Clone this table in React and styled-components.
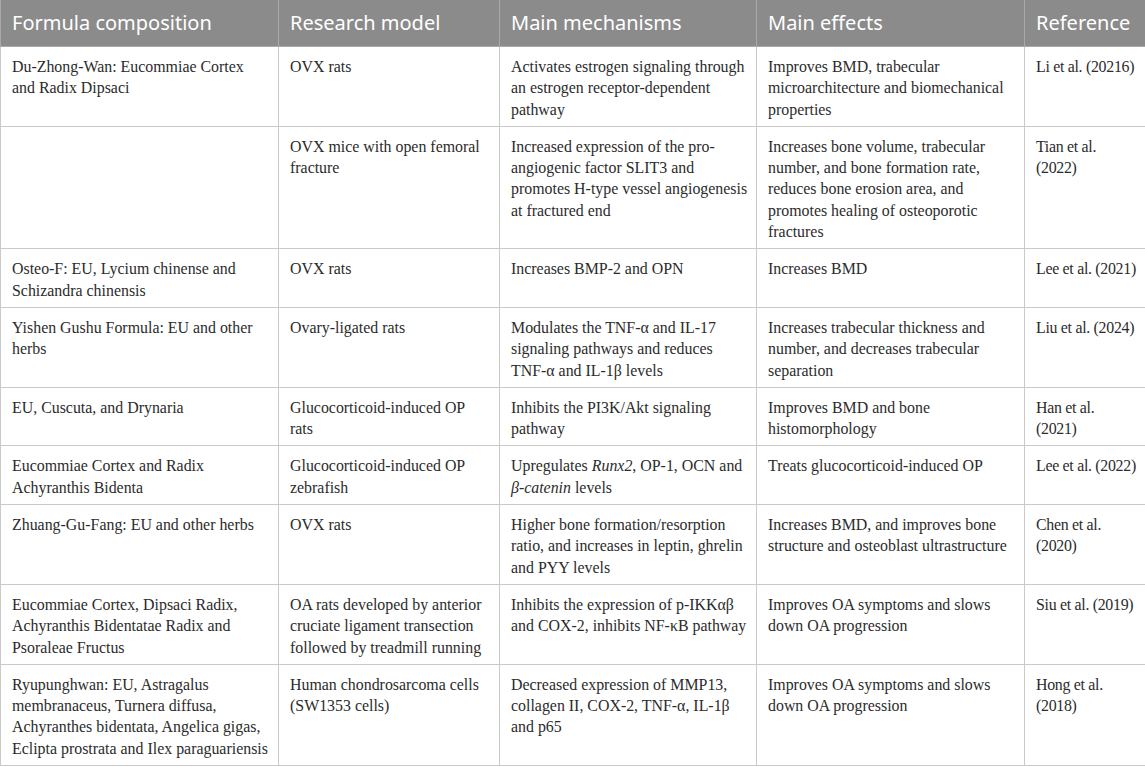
import React from 'react';
import styled, { createGlobalStyle } from "styled-components"

const Global = createGlobalStyle`
  html, body { margin: 0; padding: 0; background: #fff; }
`

const Table = styled.table`
  width: 1145px;
  border-collapse: collapse;
  table-layout: fixed;
  font-family: "Liberation Serif", "Times New Roman", serif;
  font-size: 15.9px;
  line-height: 21.3px;
  color: #2b2b2b;
`

const HeadCell = styled.th`
  background: #8b8b8b;
  color: #fff;
  font-family: "Noto Sans", "Open Sans", sans-serif;
  font-weight: 400;
  font-size: 20px;
  text-align: left;
  height: 46px;
  padding: 0 11px;
  border: 1px solid #a9a9a9;
  border-top: 0;
  white-space: nowrap;
`

const Cell = styled.td`
  vertical-align: top;
  padding: 9px ${({ $right }) => $right}px 6px 11px;
  border: 1px solid #c9c9c9;
`

const RefCell = styled(Cell)`
  white-space: nowrap;
  letter-spacing: -0.3px;
`

// word joiner keeps "TNF-α" from splitting at the hyphen
const TNF = "TNF-\u2060α"

const rows = [
  ["Du-Zhong-Wan: Eucommiae Cortex and Radix Dipsaci", "OVX rats", "Activates estrogen signaling through an estrogen receptor-dependent pathway", "Improves BMD, trabecular microarchitecture and biomechanical properties", ["Li et al. (20216)"]],
  ["", "OVX mice with open femoral fracture", "Increased expression of the pro-angiogenic factor SLIT3 and promotes H-type vessel angiogenesis at fractured end", "Increases bone volume, trabecular number, and bone formation rate, reduces bone erosion area, and promotes healing of osteoporotic fractures", ["Tian et al.", "(2022)"]],
  ["Osteo-F: EU, Lycium chinense and Schizandra chinensis", "OVX rats", "Increases BMP-2 and OPN", "Increases BMD", ["Lee et al. (2021)"]],
  ["Yishen Gushu Formula: EU and other herbs", "Ovary-ligated rats", `Modulates the ${TNF} and IL-17 signaling pathways and reduces ${TNF} and IL-1β levels`, "Increases trabecular thickness and number, and decreases trabecular separation", ["Liu et al. (2024)"]],
  ["EU, Cuscuta, and Drynaria", "Glucocorticoid-induced OP rats", "Inhibits the PI3K/Akt signaling pathway", "Improves BMD and bone histomorphology", ["Han et al.", "(2021)"]],
  ["Eucommiae Cortex and Radix Achyranthis Bidenta", "Glucocorticoid-induced OP zebrafish", <>Upregulates <i>Runx2</i>, OP-1, OCN and <i>β-catenin</i> levels</>, "Treats glucocorticoid-induced OP", ["Lee et al. (2022)"]],
  ["Zhuang-Gu-Fang: EU and other herbs", "OVX rats", "Higher bone formation/resorption ratio, and increases in leptin, ghrelin and PYY levels", "Increases BMD, and improves bone structure and osteoblast ultrastructure", ["Chen et al.", "(2020)"]],
  ["Eucommiae Cortex, Dipsaci Radix, Achyranthis Bidentatae Radix and Psoraleae Fructus", "OA rats developed by anterior cruciate ligament transection followed by treadmill running", "Inhibits the expression of p-IKKαβ and COX-2, inhibits NF-κB pathway", "Improves OA symptoms and slows down OA progression", ["Siu et al. (2019)"]],
  ["Ryupunghwan: EU, Astragalus membranaceus, Turnera diffusa, Achyranthes bidentata, Angelica gigas, Eclipta prostrata and Ilex paraguariensis", "Human chondrosarcoma cells (SW1353 cells)", "Decreased expression of MMP13, collagen II, COX-2, TNF-α, IL-1β and\u00a0p65", "Improves OA symptoms and slows down OA progression", ["Hong et al.", "(2018)"]],
]

const headers = ["Formula composition", "Research model", "Main mechanisms", "Main effects", "Reference"]
const widths = [278, 221, 257, 268, 121]
const rightPad = [10, 10, 2, 6, 2]

export default function App() {
  return (
    <>
      <Global />
      <Table>
        <colgroup>
          {widths.map((w, i) => <col key={i} style={{ width: w }} />)}
        </colgroup>
        <thead>
          <tr>
            {headers.map(h => <HeadCell key={h}>{h}</HeadCell>)}
          </tr>
        </thead>
        <tbody>
          {rows.map((r, i) => (
            <tr key={i}>
              {r.slice(0, 4).map((c, j) => <Cell key={j} $right={rightPad[j]}>{c}</Cell>)}
              <RefCell $right={rightPad[4]}>
                {r[4].map((line, k) => <React.Fragment key={k}>{k > 0 && <br />}{line}</React.Fragment>)}
              </RefCell>
            </tr>
          ))}
        </tbody>
      </Table>
    </>
  )
}
